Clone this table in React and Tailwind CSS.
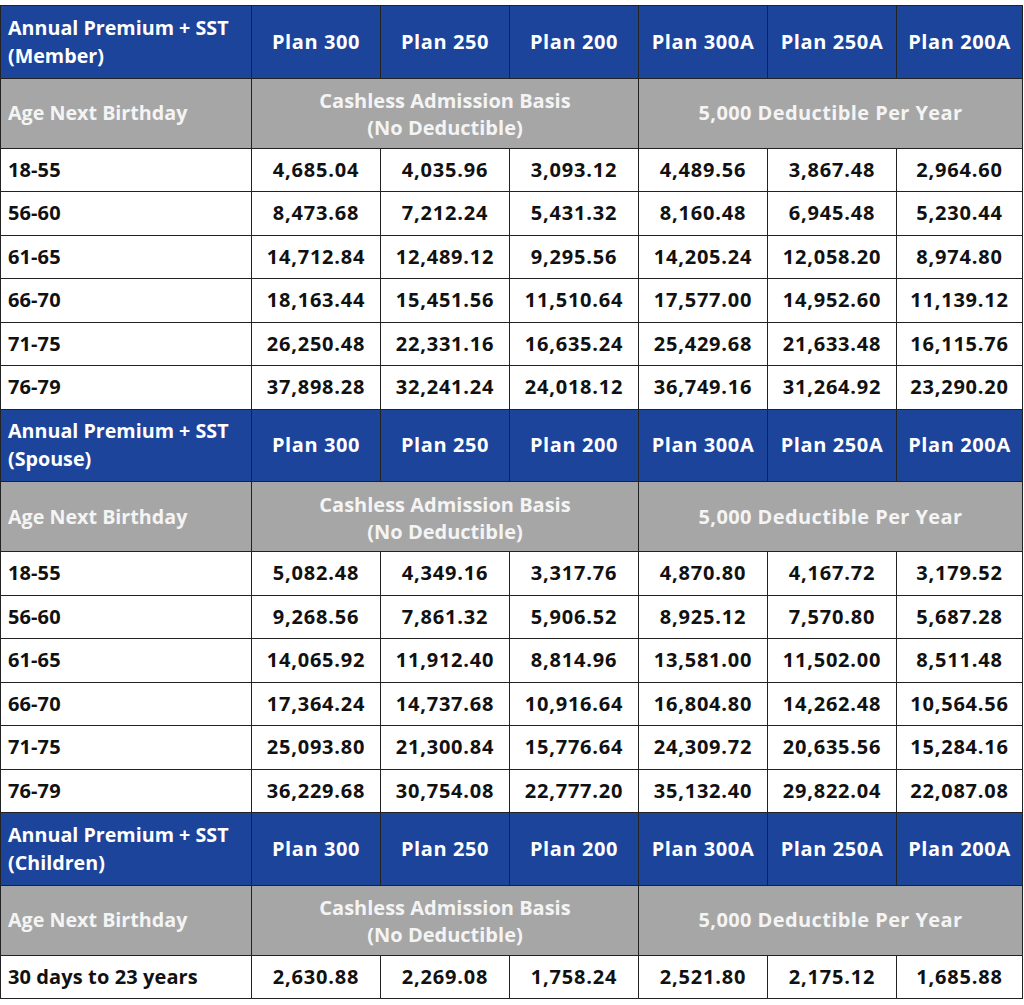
import React from 'react'

const plans = ['Plan 300', 'Plan 250', 'Plan 200', 'Plan 300A', 'Plan 250A', 'Plan 200A']

const sections = [
  {
    who: 'Member',
    rows: [
      ['18-55', '4,685.04', '4,035.96', '3,093.12', '4,489.56', '3,867.48', '2,964.60'],
      ['56-60', '8,473.68', '7,212.24', '5,431.32', '8,160.48', '6,945.48', '5,230.44'],
      ['61-65', '14,712.84', '12,489.12', '9,295.56', '14,205.24', '12,058.20', '8,974.80'],
      ['66-70', '18,163.44', '15,451.56', '11,510.64', '17,577.00', '14,952.60', '11,139.12'],
      ['71-75', '26,250.48', '22,331.16', '16,635.24', '25,429.68', '21,633.48', '16,115.76'],
      ['76-79', '37,898.28', '32,241.24', '24,018.12', '36,749.16', '31,264.92', '23,290.20'],
    ],
  },
  {
    who: 'Spouse',
    rows: [
      ['18-55', '5,082.48', '4,349.16', '3,317.76', '4,870.80', '4,167.72', '3,179.52'],
      ['56-60', '9,268.56', '7,861.32', '5,906.52', '8,925.12', '7,570.80', '5,687.28'],
      ['61-65', '14,065.92', '11,912.40', '8,814.96', '13,581.00', '11,502.00', '8,511.48'],
      ['66-70', '17,364.24', '14,737.68', '10,916.64', '16,804.80', '14,262.48', '10,564.56'],
      ['71-75', '25,093.80', '21,300.84', '15,776.64', '24,309.72', '20,635.56', '15,284.16'],
      ['76-79', '36,229.68', '30,754.08', '22,777.20', '35,132.40', '29,822.04', '22,087.08'],
    ],
  },
  {
    who: 'Children',
    rows: [
      ['30 days to 23 years', '2,630.88', '2,269.08', '1,758.24', '2,521.80', '2,175.12', '1,685.88'],
    ],
  },
]

const cell = 'border border-[#222]'

const Section = ({ who, rows }) => (
  <>
    <tr className="h-[72.5px] bg-[#1c449b] text-white">
      <td className={`${cell} px-[7px] text-left align-middle text-[19.7px] leading-[28px]`}>
        Annual Premium + SST
        <br />({who})
      </td>
      {plans.map((p) => (
        <td key={p} className={`${cell} text-center tracking-[0.6px]`}>{p}</td>
      ))}
    </tr>
    <tr className="h-[70px] bg-[#a6a6a6] text-[#f4f4f4]">
      <td className={`${cell} px-[7px] text-left text-[19.7px]`}>Age Next Birthday</td>
      <td colSpan={3} className={`${cell} pt-[2px] text-center leading-[27px]`}>
        Cashless Admission Basis
        <br />
        (No Deductible)
      </td>
      <td colSpan={3} className={`${cell} text-center tracking-[0.4px]`}>5,000 Deductible Per Year</td>
    </tr>
    {rows.map((r) => (
      <tr key={r[0]} className="h-[43.5px] bg-white text-[#111]">
        <td className={`${cell} px-[7px] text-left tracking-[0.1px]`}>{r[0]}</td>
        {r.slice(1).map((v, i) => (
          <td key={i} className={`${cell} text-center tracking-[0.8px]`}>{v}</td>
        ))}
      </tr>
    ))}
  </>
)

export default function App() {
  return (
    <div className="w-[1024px] h-[1005px] bg-white pt-[5px] font-['Open_Sans',sans-serif]">
      <table className="w-[1022px] table-fixed border-collapse text-[20px] font-bold">
        <colgroup>
          <col className="w-[251px]" />
          <col className="w-[129px]" />
          <col className="w-[129px]" />
          <col className="w-[129px]" />
          <col className="w-[129px]" />
          <col className="w-[129px]" />
          <col className="w-[126px]" />
        </colgroup>
        <tbody>
          {sections.map((s) => (
            <Section key={s.who} {...s} />
          ))}
        </tbody>
      </table>
    </div>
  )
}
